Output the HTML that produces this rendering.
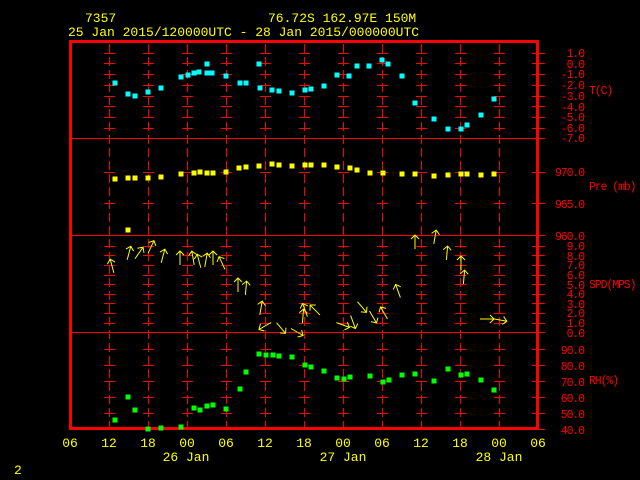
<!DOCTYPE html>
<html><head><meta charset="utf-8"><style>
html,body{margin:0;padding:0;background:#000;width:640px;height:480px;overflow:hidden}
svg{display:block}
text{font-family:"Liberation Mono",monospace;font-size:13px}
.y{fill:#ffff00}.r{fill:#ff0000}
.sm text{font-size:11.5px;letter-spacing:-1.1px}
</style></head><body>
<svg id="s" width="640" height="480" xmlns="http://www.w3.org/2000/svg">
<g id="grid"></g>
<rect x="70.5" y="41.5" width="467" height="387" fill="none" stroke="#f00" stroke-width="3"/>
<line x1="70" y1="138.5" x2="545" y2="138.5" stroke="#f00"/>
<line x1="70" y1="235.5" x2="545" y2="235.5" stroke="#f00"/>
<line x1="70" y1="332.5" x2="545" y2="332.5" stroke="#f00"/>
<g id="pts"></g>
<g id="arr" stroke="#ffff00" stroke-width="1" fill="none"></g>
<text x="85" y="22" class="y">7357</text>
<text x="268" y="22" class="y">76.72S  162.97E   150M</text>
<text x="68" y="36" class="y">25 Jan 2015/120000UTC - 28 Jan 2015/000000UTC</text>
<g class="r sm" text-anchor="end">
<text x="584" y="57">1.0</text><text x="584" y="68">0.0</text><text x="584" y="78">-1.0</text><text x="584" y="89">-2.0</text><text x="584" y="100">-3.0</text><text x="584" y="111">-4.0</text><text x="584" y="121">-5.0</text><text x="584" y="132">-6.0</text><text x="584" y="142">-7.0</text>
<text x="584" y="176">970.0</text><text x="584" y="208">965.0</text><text x="584" y="240">960.0</text>
<text x="584" y="250">9.0</text><text x="584" y="260">8.0</text><text x="584" y="269">7.0</text><text x="584" y="279">6.0</text><text x="584" y="289">5.0</text><text x="584" y="298">4.0</text><text x="584" y="308">3.0</text><text x="584" y="317">2.0</text><text x="584" y="327">1.0</text><text x="584" y="337">0.0</text>
<text x="584" y="354">90.0</text><text x="584" y="370">80.0</text><text x="584" y="386">70.0</text><text x="584" y="402">60.0</text><text x="584" y="418">50.0</text><text x="584" y="434">40.0</text>
</g>
<g class="r sm">
<text x="589" y="94">T(C)</text><text x="589" y="190">Pre (mb)</text><text x="589" y="288">SPD(MPS)</text><text x="589" y="384">RH(%)</text>
</g>
<g class="y" text-anchor="middle">
<text x="70" y="447">06</text><text x="109" y="447">12</text><text x="148" y="447">18</text><text x="187" y="447">00</text><text x="226" y="447">06</text><text x="265" y="447">12</text><text x="304" y="447">18</text><text x="343" y="447">00</text><text x="382" y="447">06</text><text x="421" y="447">12</text><text x="460" y="447">18</text><text x="499" y="447">00</text><text x="538" y="447">06</text>
<text x="186" y="461">26 Jan</text><text x="343" y="461">27 Jan</text><text x="499" y="461">28 Jan</text>
</g>
<text x="14" y="474" class="y">2</text>
</svg>
<script>
var NS="http://www.w3.org/2000/svg";
function el(p,t,a){var e=document.createElementNS(NS,t);for(var k in a)e.setAttribute(k,a[k]);p.appendChild(e);return e;}
var g=document.getElementById("grid");
var xs=[109,148,187,226,265,304,343,382,421,460,499];
var ticks=[];
for(var i=0;i<9;i++)ticks.push(52.7+i*10.7);
ticks.push(171.7,203.3);
for(var i=0;i<10;i++)ticks.push(245.7+i*9.63);
for(var i=0;i<6;i++)ticks.push(349.3+i*15.9);
xs.forEach(function(x,j){
 var c=(j%3==2)?"#f00":"#f00";
 el(g,"line",{x1:x+.5,y1:44,x2:x+.5,y2:427,stroke:c,"stroke-dasharray":"9,4"});
 ticks.forEach(function(y){el(g,"line",{x1:x-5,y1:Math.round(y)+.5,x2:x+6,y2:Math.round(y)+.5,stroke:"#f00"});});
});
ticks.forEach(function(y){el(g,"line",{x1:532,y1:Math.round(y)+.5,x2:545,y2:Math.round(y)+.5,stroke:"#f00"});});
var p=document.getElementById("pts");
function pts(c,a){for(var i=0;i<a.length;i+=2)el(p,"rect",{x:a[i]-2.5,y:a[i+1]-2.5,width:5,height:5,fill:c});}
pts("#00ffff",[115,83,128,94,135,96,148,92,161,88,181,77,188,75,194,73,199,72,207,64,207,73,212,73,226,76,240,83,246,83,259,64,260,88,272,90,279,91,292,93,305,90,311,89,324,86,337,75,349,76,357,66,369,66,382,60,388,64,402,76,415,103,434,119,448,129,461,129,467,125,481,115,494,99]);
pts("#ffff00",[128,230,115,179,128,178,135,178,148,178,161,177,181,174,194,173,200,172,207,173,213,173,226,172,239,168,246,167,259,166,272,164,279,165,292,166,305,165,311,165,324,165,337,167,350,168,357,170,370,173,383,173,402,174,415,174,434,176,448,175,461,174,467,174,481,175,494,174]);
pts("#00ff00",[115,420,128,397,135,410,148,429,161,428,181,427,194,408,200,410,207,406,213,405,226,409,240,389,246,372,259,354,266,355,273,355,279,356,292,357,305,365,311,367,324,371,337,378,344,379,350,377,370,376,383,382,389,380,402,375,415,374,434,381,448,369,461,375,467,374,481,380,494,390]);
var a=document.getElementById("arr");
var W=[[112,266,-15],[129,253,15],[139,253,35],[151,247,25],[163,256,15],[180,258,0],[193,258,-10],[199,261,-15],[206,260,10],[213,258,0],[222,263,-25],[238,285,0],[246,288,5],[261,308,10],[265,326,-120],[281,328,140],[297,332,120],[303,316,5],[305,310,-20],[315,310,-45],[343,325,110],[353,322,160],[362,307,140],[373,317,150],[384,313,-30],[398,291,-20],[415,242,0],[435,237,10],[447,253,5],[461,263,0],[464,277,5],[487,319,90],[500,320,100]];
W.forEach(function(w){var gg=el(a,"g",{transform:"translate("+w[0]+","+w[1]+") rotate("+w[2]+")"});
 el(gg,"path",{d:"M0 7 L0 -7 M-4 -3 L0 -7 L4 -3"});});
</script>
</body></html>
